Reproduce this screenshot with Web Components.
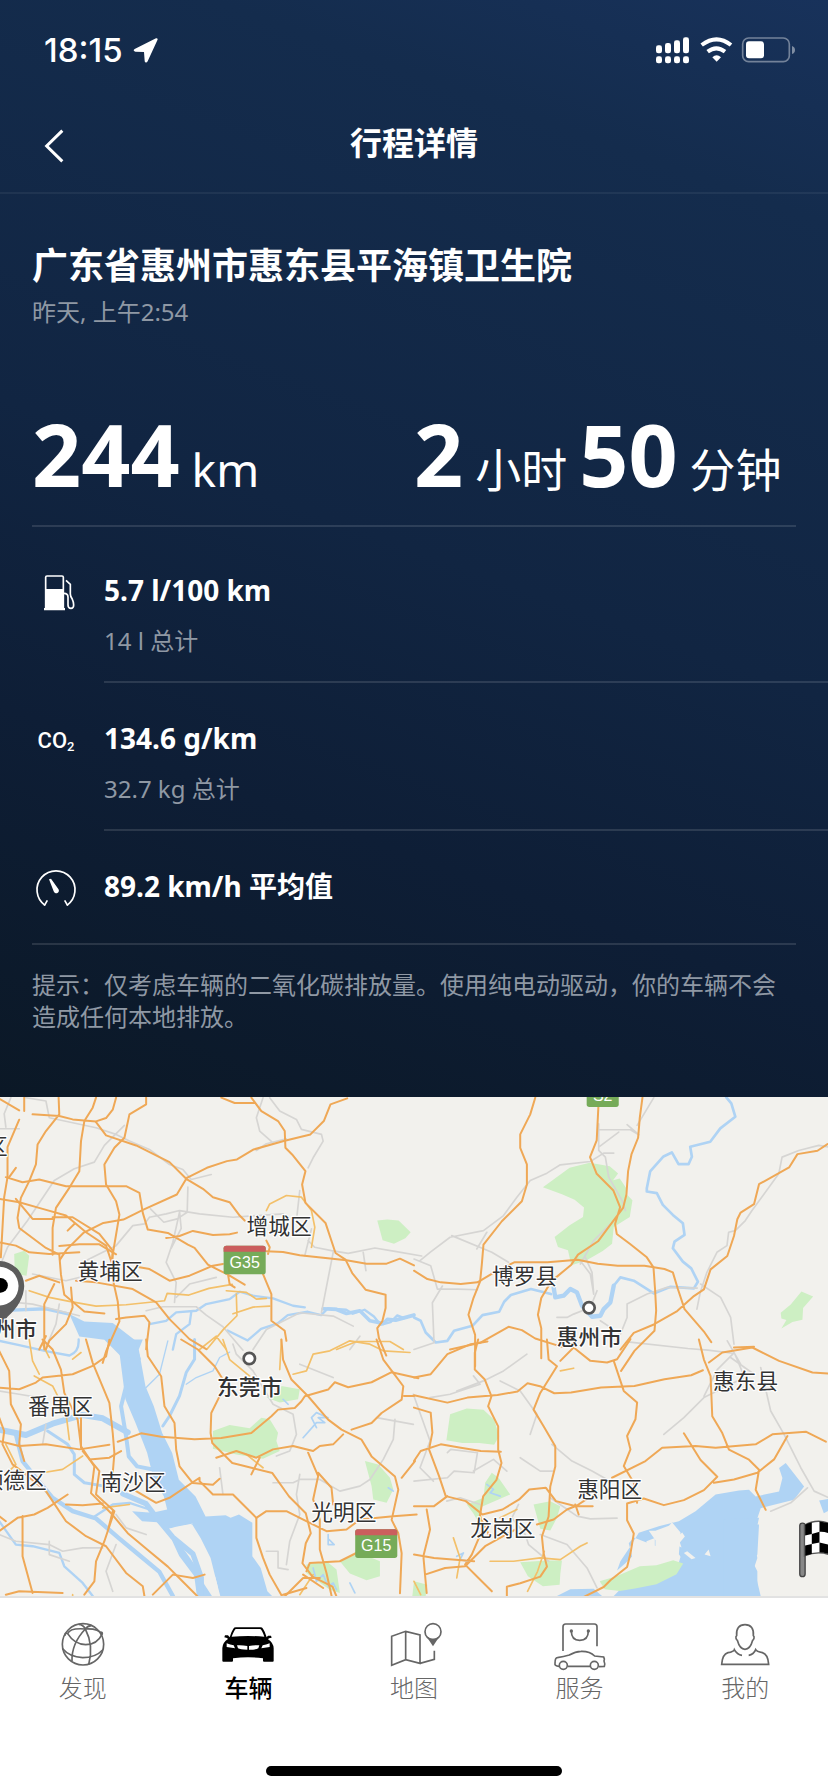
<!DOCTYPE html>
<html lang="zh-CN">

<head>
  <meta charset="UTF-8">
  <meta name="viewport" content="width=device-width, initial-scale=1.0">
  <title>行程详情</title>
  <style>
    body {
      margin: 0;
      font-family: "Noto Sans", "Noto Sans CJK SC", sans-serif;
      background: #fff;
    }
  </style>
</head>

<body>
  <trip-page>
    <status-bar slot="top">18:15</status-bar>
    <nav-bar slot="top">行程详情</nav-bar>
    <trip-summary slot="top">
      <span slot="place">广东省惠州市惠东县平海镇卫生院</span>
      <span slot="time">昨天, 上午2:54</span>
      <trip-figure slot="figures"><b>244</b><span>km</span></trip-figure>
      <trip-figure slot="figures"><b>2</b><span>小时</span><b>50</b><span>分钟</span></trip-figure>
    </trip-summary>
    <trip-stats slot="top">
      <trip-stat icon="fuel">5.7 l/100 km<span slot="total">14 l 总计</span></trip-stat>
      <trip-stat icon="co2">134.6 g/km<span slot="total">32.7 kg 总计</span></trip-stat>
      <trip-stat icon="gauge">89.2 km/h 平均值</trip-stat>
      <span slot="note">提示：仅考虑车辆的二氧化碳排放量。使用纯电动驱动，你的车辆不会造成任何本地排放。</span>
    </trip-stats>
    <route-map></route-map>
    <tab-bar slot="bottom">
      <tab-item icon="globe">发现</tab-item>
      <tab-item icon="car" active>车辆</tab-item>
      <tab-item icon="map">地图</tab-item>
      <tab-item icon="service">服务</tab-item>
      <tab-item icon="person">我的</tab-item>
    </tab-bar>
  </trip-page>

  <script>
    const ICONS = {
      fuel: `<svg viewBox="6 27 144 144" fill="none" stroke="#fff" stroke-width="5">
        <path d="M47 146V52q0-4 4-4h45q4 0 4 4v94"/>
        <path d="M45 87h57v57h3v7H42v-7h3z" fill="#fff" stroke="none"/>
        <path d="M108 61l13 12v29q0 7 6 16 4 8 4 17 0 10-8 10-9 0-9-10v-24q0-11-12-11" stroke-width="5"/>
      </svg>`,
      co2: '<span class="co2">CO<sub>2</sub></span>',
      gauge: `<svg viewBox="96 559 144 144" fill="none" stroke="#fff" stroke-width="5">
        <path d="M135 680a57 57 0 1 1 66 0"/>
        <path d="M142 665l-9 16M194 665l9 16" />
        <path d="M147 602l6-2 22 31a8 8 0 1 1-14 7z" fill="#fff" stroke="none"/>
      </svg>`,
      globe: `<svg viewBox="164 90 168 156" fill="none" stroke="#666" stroke-width="5">
        <circle cx="248" cy="163" r="62"/>
        <path d="M255 117q-46-4-53 14 20 32 54 33 34 0 49-31-10-18-50-16z"/>
        <path d="M255 117q-6-13-20-14M255 117q6-9 18-10M255 117q-42 44-40 97M255 117q26 50 10 107"/>
        <path d="M202 131q-8-4-8 6M305 133q3-5-3-7M187 176q20 24 60 27 38 0 60-23"/>
      </svg>`,
      car: `<svg viewBox="661 90 168 156">
        <path d="M690 142q5-18 11-26 2-4 8-4h73q6 0 8 4 6 8 11 26l4-5h9l2 6-8 2-3 3q16 10 17 27v38q0 2-3 2h-26q-3 0-3-3v-7q-45-6-90 0v7q0 3-3 3h-26q-3 0-3-3v-38q1-17 17-27l-3-3-8-2 2-6h9z"/>
        <path d="M696 140q7-18 12-23h74q6 5 12 23-49-4-98 0zM681 160q11 5 21 6l4 9-25-4zM810 160q-11 5-21 6l-4 9 25-4zM712 166q16-1 31 2v11q-22 0-28-4zM779 166q-16-1-31 2v11q22 0 28-4z" fill="#fff"/>
      </svg>`,
      map: `<svg viewBox="1158 90 168 156" fill="none" stroke="#666" stroke-width="5">
        <path d="M1175 226v-87l42-15 43 11v85l-43-11zM1217 124v85M1260 220l43-12v-26"/>
        <circle cx="1299" cy="125" r="24"/>
        <path d="M1287 146l12 18 12-18q-12 6-24 0z" fill="#666"/>
      </svg>`,
      service: `<svg viewBox="413 90 168 156" fill="none" stroke="#666" stroke-width="5">
        <path d="M446 183v-73q0-8 8-8h86q8 0 8 8v59M471 123q0 28 25 28 26 0 26-28"/>
        <path d="M434 229q-14-1-12-9 0-17 7-17 19-3 36-8 18-11 35-11 26-1 41 14l27 3q4 7 1 12 4 9 1 16l-17 1M460 229h67"/>
        <circle cx="447" cy="226" r="12"/><circle cx="540" cy="226" r="12"/>
        <g fill="#666" stroke="none"><circle cx="471" cy="123" r="5"/><circle cx="522" cy="123" r="5"/></g>
      </svg>`,
      person: `<svg viewBox="910 90 168 156" fill="none" stroke="#666" stroke-width="5">
        <path d="M994 104c-18 0-27 12-25 33-5 4-1 12 2 14 4 15 13 27 23 27s19-12 23-27c3-2 7-10 2-14 2-21-7-33-25-33z"/>
        <path d="M985 196q-15-2-23-17-2 6-19 9-17 5-19 35h141q-2-30-19-35-17-3-20-9-6 15-21 17"/>
      </svg>`
    };

    class BaseElement extends HTMLElement {
      constructor() {
        super();
        this.attachShadow({ mode: 'open' });
      }
      connectedCallback() {
        this.shadowRoot.innerHTML = this.render();
      }
    }

    class TripPage extends BaseElement {
      render() {
        return `
<style>
  :host { display: flex; flex-direction: column; min-height: 100vh; }
  header { color: #fff; background: linear-gradient(200deg, #18325b 0%, #142c4d 16%, #112542 50%, #0e1e36 72%, #0b1826 100%); }
  main { flex: 1; display: flex; min-height: 300px; }
</style>
<header><slot name="top"></slot></header>
<main><slot></slot></main>
<slot name="bottom"></slot>`;
      }
    }

    class StatusBar extends BaseElement {
      render() {
        return `
<style>
  :host {
    display: flex; justify-content: space-between; align-items: center;
    height: 100px; padding: 0 32px 0 44px; box-sizing: border-box;
    font: 500 33px/40px Inter, sans-serif;
  }
  div { display: flex; align-items: center; gap: 10px; }
  svg { display: block; }
</style>
<div>
  <slot></slot>
  <svg width="25" height="25" viewBox="311 53 75 75" fill="#fff"><path d="M380 54q7-1 4 6l-29 63q-3 5-7 3-2-1-2-5l-2-26-26-1q-9-3-2-8z"/></svg>
</div>
<svg width="141" height="28" viewBox="42 47 423 84" fill="#fff">
  <rect x="45" y="75" width="18" height="24" rx="7"/><rect x="72" y="68" width="18" height="31" rx="7"/>
  <rect x="99" y="60" width="18" height="39" rx="7"/><rect x="126" y="51" width="18" height="48" rx="7"/>
  <rect x="45" y="108" width="18" height="21" rx="7"/><rect x="72" y="108" width="18" height="21" rx="7"/>
  <rect x="99" y="108" width="18" height="21" rx="7"/><rect x="126" y="108" width="18" height="21" rx="7"/>
  <path d="M182 74q45-34 88 0M200 94q26-20 52 0" fill="none" stroke="#fff" stroke-width="12"/>
  <path d="M227 124l-13-13q13-13 26 0z"/>
  <rect x="305" y="53" width="140" height="71" rx="18" fill="none" stroke="#fff" stroke-opacity=".4" stroke-width="5"/>
  <rect x="315" y="63" width="54" height="51" rx="9"/>
  <path d="M453 77q9 3 9 12t-9 12z" opacity=".45"/>
</svg>`;
      }
    }

    class NavBar extends BaseElement {
      render() {
        return `
<style>
  :host {
    display: grid; grid-template-columns: 48px 1fr 48px; align-items: center;
    height: 94px; padding: 0 32px; box-sizing: border-box;
    border-bottom: 2px solid rgba(255, 255, 255, .06);
  }
  h1 { margin: 0; padding-bottom: 6px; font-size: 32px; line-height: 40px; font-weight: 600; text-align: center; }
  button { display: flex; padding: 0; width: 48px; height: 48px; align-items: center; justify-content: center; border: 0; background: none; }
  svg { margin-right: 4px; }
</style>
<button aria-label="返回"><svg width="20" height="34" viewBox="42 327 60 102" fill="none" stroke="#fff" stroke-width="9"><path d="M97 332L50 378l47 46"/></svg></button>
<h1><slot></slot></h1>`;
      }
    }

    class TripSummary extends BaseElement {
      render() {
        return `
<style>
  :host { display: block; margin: 0 32px; padding: 48px 0 18px; border-bottom: 2px solid rgba(255, 255, 255, .12); }
  h2 { margin: 0; font-size: 36px; line-height: 48px; font-weight: 600; }
  p { margin: 6px 0 88px; font-size: 24px; line-height: 32px; color: #8f98a4; }
  div { display: grid; grid-template-columns: 1fr 1fr; }
</style>
<h2><slot name="place"></slot></h2>
<p><slot name="time"></slot></p>
<div><slot name="figures"></slot></div>`;
      }
    }

    class TripFigure extends BaseElement {
      render() {
        return `
<style>
  :host { display: flex; align-items: baseline; gap: 12px; line-height: 76px; font-size: 46px; white-space: nowrap; }
  ::slotted(b) { font-size: 86px; font-weight: 700; }
</style>
<slot></slot>`;
      }
    }

    class TripStats extends BaseElement {
      render() {
        return `
<style>
  :host { display: block; padding: 8px 0 64px; }
  p { margin: 0 32px; padding-top: 24px; font-size: 24px; line-height: 32px; color: #8f98a4; border-top: 2px solid rgba(255, 255, 255, .12); }
</style>
<slot></slot>
<p><slot name="note"></slot></p>`;
      }
    }

    class TripStat extends BaseElement {
      render() {
        return `
<style>
  :host { display: flex; gap: 24px; padding-left: 32px; }
  .icon { width: 48px; height: 48px; margin-top: 34px; display: flex; align-items: center; justify-content: center; }
  svg { width: 48px; height: 48px; }
  .co2 { font: 500 22px/24px Roboto, sans-serif; }
  sub { font-size: 13px; line-height: 12px; vertical-align: -3px; }
  .text { flex: 1; padding: 36px 0 24px; border-bottom: 2px solid rgba(255, 255, 255, .12); }
  :host(:last-of-type) .text { border: 0; padding-bottom: 38px; }
  h3 { margin: 0; font-size: 28px; line-height: 38px; font-weight: 700; }
  p { margin: 16px 0 0; font-size: 24px; line-height: 32px; color: #8f98a4; }
</style>
<div class="icon">${ICONS[this.getAttribute('icon')]}</div>
<div class="text">
  <h3><slot></slot></h3>
  ${this.querySelector('[slot=total]') ? '<p><slot name="total"></slot></p>' : ''}
</div>`;
      }
    }

    class RouteMap extends BaseElement {
      render() {
        return `
<style>
  :host { display: flex; flex: 1; background: #f2f1ed; overflow: hidden; }
  svg { display: block; width: 100%; height: 100%; }
  .park { fill: #cdefc3; }
  .sea { fill: #afd3f4; }
  .river, .road, .lane, .rail { fill: none; stroke-linejoin: round; stroke-linecap: round; }
  .river { stroke: #afd3f4; stroke-width: 7; }
  .road { stroke: #efa856; stroke-width: 6; }
  .lane { stroke: #f3c06a; stroke-width: 5; }
  .rail { stroke: #d6d5d3; stroke-width: 5; }
  .place { font-size: 65px; fill: #333; stroke: #fff; stroke-width: 7; stroke-linejoin: round; paint-order: stroke; text-anchor: middle; }
  .city { font-weight: 500; }
  .shield { font: 48px "Liberation Sans", sans-serif; fill: #fff; text-anchor: middle; }
</style>
<svg viewBox="0 0 2484 1494" preserveAspectRatio="xMidYMid slice" role="img" aria-label="行程地图">
  <!-- parks -->
  <g class="park">
    <path d="M1132 370l30-3 34 3 36 35-16 18-34 16-34-10z"/>
    <path d="M45 470l30-10 15 15-8 60-35-5z"/>
    <path d="M1628 270l80-58 60-15 60 10 25 22-15 20 20-5 20 30-2 15 20 20-8 50-48 30-5 50-28 22-52 30-42 13-10-45-30-10-10-30 45-35 40-25 3-28-28-23-38-17z"/>
    <path d="M2340 646l30-25 32-39 35 15-30 35-2 35-30 7-33 19 15-25-15-5z"/>
    <path d="M640 1000l50-18 60 10 35-32 25 5 25 40-5 25 10 30-50 23-80-13-70-17z"/>
    <path d="M845 865l55 10-5 30-55 10-40-15 40-12z"/>
    <path d="M1095 1090l40 10 35 40 10 35-20 40-40-10-5-40z"/>
    <path d="M920 1400l60-10 30 25 10 70-30-10-70-50zM1020 1390l60-25 60 25 0 45-40 12-50-20z"/>
    <path d="M1350 950l50-17 50 3 32 30 15 50-15 25-45-5-50 0-48-8z"/>
    <path d="M1400 1220l50-20 5-45 20-30 20 15 35 50-35 15-50 22-5 55-20-35z"/>
    <path d="M1600 1220l50-10 30 15-10 35-20 38-30-5z"/>
    <path d="M1560 1393l80-5 45 0-5 40-2 32-50 5-45-30z"/>
    <path d="M1242 1450l40 10-5 34h-40z"/>
  </g>

  <!-- sea and wide channels -->
  <g class="sea">
    <path d="M355 726h75l-12 30 20 110 25 60 25 80 30 60 20 80 50 50 30 60 60-4 15 8 25-10 40 25v100l25 35 20 70 40 40h-180l-10-60-20-80-30-60-25-40-70 5-10-10-70-5-30-30 60 5 45-10-10-40-30-50-20-80-35-90-30-70z"/>
    <path d="M500 1290l-30-40 60 0 40 30-70 15 50 55 35 50 30 60 22 34h-45l-8-60-45-60z"/>
    <path d="M210 650l45 22 85 5 65 50 20 60-60-10-50-50-75-10z"/>
    <path d="M2110 1494l10-90-30-15-30 15-25-35 5-65-25-30-10 10-40 15-20 0 20 28 0 17-65-25-15 17 10 40-20 20-25 22 10-28 30-45 25-40 60-20 60-15 50-30 60-50 70-12 30-2 20 20 70-15 10-40-10-30 20-15 55 70-30 40-100 25-30 90-2 180z"/>
    <path d="M1960 1428l70-18 15-50 80-80 150 0-5 90-15 20 15 30 0 74h-430l20-20z"/>
    <path d="M1670 1494l40-20 70-2 25 22zM2455 1208l29-5v35l-15 8z"/>
    <path d="M2275 1260l-15 70 10 50-10 30 20 84h-110v-230z"/>
  </g>
  <path class="park" d="M1798 1450l50-15 70-30 50-3 50-15 30 10-20 32-60 30-60 12-50 8-45-5z"/>
  <path d="M2000 1300l35 12 10-8 8 12-15 18 5 15-40-20-20-15zM1938 1330l25-10 0 40-25 12zM2050 1365l10-5 25 20-12 4zM2112 1370l12-15 6 20z" fill="#f2f1ed"/>
  <path d="M500 1295l30-8 50-10-30 20zM575 1279l22 58 50 100 15 57h-20l-30-105-75-70z" fill="#f2f1ed"/>

  <!-- rivers -->
  <g class="river">
    <path d="M40 638l100-4 70 16" stroke-width="10"/>
    <path d="M0 730l60 13 80 18 70 13q30-10 28-48"/>
    <path d="M450 680l50-10 30-25 60-5 30-20 70-15 30-22 40 12 60 8 60 22 35 5" stroke-width="7"/>
    <path d="M575 645l-5 35-40 30-10 46M1242 652l-30 10-20-8-20 20-30 8-20-25-28-20-35 12-20-12-55-4-20 20-40-10-60 10-30 25-50 16-40 35-60-30"/>
    <path d="M970 634l40 2 30 12 40-8 30 30 40 8 12-12 25 2 55-15" stroke-width="11"/>
    <path d="M1242 660l20 10 15 35 30 30 35-5 20-30 55-15 30-32 50-10 15-30 20-20 60-18 60 15M1660 570l5 30 25-5 20-20 20 10 15 40 30 33 25-3 10-20 20-20 10-50 20-25 40 10 60 38 50-20 70 5 12-20-20-40-25-20-30-40 5-20 30-20-5-35-30-25-30-30-18-35-30-5 0-10 10-50 40-45 25-12 20 35 30 0 10-22-5-30 60-15 30-40 45-35-12-40-15-18" stroke-width="8"/>
    <path d="M1660 570l5 30 25-5 20-20 20 10 15 40 30 33 25-3 10-20 20-20 10-50" stroke-width="13"/>
    <path d="M0 996l80 16 80-34 90-26 60 10 75 42" stroke-width="18"/>
    <path d="M380 866l-15 60 15 90 8 60 25 30 70 14" stroke-width="12"/>
    <path d="M50 1010l20 80 40 50 50 60 60 40 70 22 70 60 60 50 60 50 40 72" stroke-width="13"/>
    <path d="M145 1000l60 40 20 30 0 60 30 25 60 10" stroke-width="9"/>
    <path d="M370 1188l70 30 30 40 50 60 60 50 25 70 0 55" stroke-width="16"/>
    <path d="M0 1270l50 70 50 5 80 20 15 40 55 50 30 39M280 1260l60-40 50-5 60 20"/>
    <path d="M490 985l20-30 30-60 20-70 25-40 0-59" stroke-width="9"/>
    <path d="M560 860l30-20 50-20 20-40 30-16M440 870l40-40 25-100" stroke-width="4"/>
    <path d="M910 1020l40-45 25 0-20-15 30 0-35-15-15 15 15 30M985 1310l0 30 18 0-15-15M940 1410l10 40 20-20 15 35 15-10 10 20M1050 1455l15 30M850 905l15 15" stroke-width="5"/>
    <path d="M1460 1160l20 15-10 10 30 10M1370 1375l20-10-10 20 25 5M1165 1170l15 10" stroke-width="5"/>
  </g>

  <!-- minor roads and railways -->
  <g class="rail">
    <path d="M80 2l60 10 10 50 140 30 60 20 40 20 60 25 60 45 40 15 25 30 60-15M20 90l-5-40 20-48M0 95h60"/>
    <path d="M5 500l20-50 60-80 40-60 40-60 60-35 60-20 30-50 60-60"/>
    <path d="M565 270l-2 75-30 20-40 10-40-40M450 360l50-10 40-10 60 10 100 10 150-10M540 345l-20 90-20 60 30 60-5 60M540 343l5 50-30 60M450 360l-15 20-35 5-50 60-40 20-60 30"/>
    <path d="M790 2l-20 60 10 40 40 35M810 2l30 40 50 25 15 30 60 15 5 20-30 50-15 30M770 160l30-20 60-15M900 280l-10 90M1000 465l-35 180M925 430l20 20 50 10 50 8 80-16 60 10 80 14M915 475l20-80M1090 465l8 55"/>
    <path d="M0 610l100 10 80 20 60 15M440 640l50-12 100 0 30 25 50 35 60 70M80 580l0 60M530 600l40-40 80-20M760 756l40-60 100-50 100 10 60 30M180 620l-10 60-30 70M1050 756l30-40M100 530l100 20 80-20"/>
    <path d="M1242 485l50 20 20 70 60 0 60 2M1260 490l30-25 60-45 100-20 60-45 40-55 40-50 50-22 40-25 90-10 40-25 30 0M1430 455l30-50M1355 415l120 50 50 30M1795 80v80l20 20 10 60 40 70 10 30M1795 98h95l25 15-35-30M1795 150l60-45M1910 85l50-83M1740 490l30 40 10 60M1755 480l20 45 5 65M1830 380l-50 50-40 70"/>
    <path d="M2484 150l-30-5-60 15-50 20-10 50-80 110-20 30-30 30-20 5-5 40-30 20-30 60-20 60-10 50M2100 560l60 40 30 60 10 80M1242 756l60-20-5-120 30-50M1880 620l60-30 60-20 90 2M1880 620l0 40-20 50-60-40M1670 660l30 0 20-10 50-20 20-50"/>
    <path d="M1882 733l180 20 60 5 80 10 25 60M2180 730l40 70M1990 1010l60-50 60-60 80-40 60-30M2200 766l-50 50-40 80M2280 810l30 130 40 70 50 100 40 70 44 20M2190 780l70 50"/>
    <path d="M1370 880l80-30 60-30 70-50M1290 900l60-10 90-30-20-25M1500 850l60 30 50 70-20 60M1655 1040l60 50 60 30 45 25M1650 1200l80 55 40 8 80-2M1242 1150l100-10 20-20 60 5 10-60-80-10-10 10M1300 1150l-40-40 30-80-50-140M1555 1220l-20 40 40 50 10 30 60 50M1620 1310l80 30 60 70 30 60M1560 1080l60 40h40M1420 1120l60-35 40 35M1340 1210l40-10 60 20M2310 1240l60-25 50-45"/>
    <path d="M700 740l10 30 50 50 60 100 60 30 10 60-20 50-40 15M820 1155l60 0 20-10 60 0 60 35 60-15 30-20 40-60 30-60 5-60M900 1130l-10 60 10 60-30 80-10 70M800 1360l35 0 0 50 30 5M660 1110l10 80M0 880l60 10 60 10M140 980l-10 60M0 1310l50 20 100 10 40 20 60-10 60 0M150 1330v40l60 20M350 1250l30 40 60 20M340 1480l-20-60 30-80M1130 960l110 20M1000 840l-100-40"/>
  </g>

  <!-- secondary roads -->
  <g class="lane">
    <path d="M90 580l60 20 60 12 80 14 90-4 115-12 8-22 65 5 60-20 70-12M680 580l60 5 30 20 30-2M710 590l2 65-40 40-50 60M810 626l-50 3-60 20M800 340l10-20 50-25 45 5 30 40 10 50-10 60M600 756l50-40 30 40M1010 756l60-24h100l40 24"/>
    <path d="M880 830l40-10 20-50 50-10 60-30 60 10 40 20 80 5M670 726l20 60 60 50M845 726l-5 90M200 946l10 80M205 940l0-30M105 835l55 30 30 60M310 1230l80-10M20 1040l30 60-30 30M130 1125l60-10 60-40M120 830l-20-40-10-64"/>
    <path d="M1470 1390l70 0 80-10 60 5 60-40 20-10M1632 1360l-20 60-30 60M1500 1260l50-25M1360 1320l20 60-10 60M740 1070l50 40M1242 1450l20 40M900 1490l40-60M1680 820l40-8M130 740l20 40M220 1490l0 4M220 785l25-20"/>
  </g>

  <!-- motorways, north-west -->
  <g class="road">
    <path d="M0 5l60 35M75 2v40M60 68L25 150v90L15 300 5 480M100 52l80 5 40 10 70 6 30-10 20-25 10-36M178 2l2 50-40 50-25 40-5 60-20 50-25 50-10 60 5 30 80 60 40 20 5 60 10 60 60 50 60 6M290 2l-10 30-25 40-10 60-5 90-30 50-40 60-10 60 0 80M440 2v20l-50 30-15 70-30 30-30 50 5 60 30 50 10 40-20 120-5 50 20 90 5 60-40 90-10 34"/>
    <path d="M290 75l30 40 90 30 100 50 50 50 50 30 30 25 50 15 30 40 15 15M562 242l60-30 60-20 30-5 50-30 90-25 80-20 40-40 20-50 50-18M562 242l-30 50-100 45-60 30-60 10-60 30-50 50-20 30M665 2l40 16h60M755 2l30 40 50 30 20 30 2 50 20 20 40 50-10 40 10 55 60 60 30 90 30 20 20 40 40 50 60 15 0 40-10 40-15 20 5 30 22 52"/>
    <path d="M0 305l60 10 70 20 70 20 60 50 60 40 20 60M20 240l50 15 50-8 80 20 80 0 100 0 40 20 10 60 15 50 60 10 60 35 20 10 40 50 60 30 50 30M50 212l-20 28M500 422l40-6 40-15 60 12 50-2 22-5M800 462l50 2 50 10 140 15 60 10 60 0 40-15 42 20M800 430l10 20-5 20M0 435l50 10 40 20 60 5 90-5M420 510l30 5 60 35 60-15 70-30 30-5M80 550l40-15 60 20M230 550l60 5 110 20 70 40 40 50 60 60 50 30M350 665l30-5 55-5 15 20-10 80M790 530l25 60v80l40 30 5 30M685 530l5 30 15 10M205 400l20-20M160 360l60 0 80 50 40 50-5 80"/>
    <path d="M135 756V620l30-60M215 570l5 60-20 50-50 50-10 26M120 756l20-40M180 446l60-5 60 0 50 30M50 305l50 60 60 0"/>
  </g>

  <!-- motorways, north-east -->
  <g class="road">
    <path d="M1605 2l-15 50-30 60 0 40 20 50 0 60-15 50-60 60-55 70-5 60-5 50-20 50-15 50 20 60 0 94M1794 30l-5 100-20 50 20 50 50 50 20 50-15 50 5 30 40 30 50 40 20 30 5 70 3 60-5 60-60 60-40 60M1926 2l-8 60-5 60-20 50-10 50-5 70-10 40-45 60-30 40-60 40-20 30-60 50-30 50-10 50 10 40 0 90"/>
    <path d="M1242 520l40 25 40 10 60 5 50-5 50-30 60-30 100 0 90-8 60 12 60 6 80 0 60 10 25 10 15 50 20 60 60 70 20 29M1350 756l90-20 85-48 40 10 40 25 80 25M1860 756l40-50 60-25 70-40 50-45 30-20 20-60 50-40 20-60 10-50 10-20 40-25 15-60 90-50 25-40 60-10 30-20M2200 750l60-2"/>
  </g>

  <!-- motorways, south-west -->
  <g class="road">
    <path d="M0 870l60 5 50-20 20-15 90-10 60-25 40-28 10-50M0 960l15 40-5 40 30 60 40 30 60 50 60 90 60 45 60 30 60 80 50 40 10 60M0 760l30 60 5 100 30 60-5 60 15 50M130 726l30 30 25 60 10 70 40 80 10 80 40 60-10 80 60 60 50 60 60 50 60 50 40 40 50 50"/>
    <path d="M260 726l20 70 25 60 25 60 10 90 5 60-5 60M440 726l5 50 40 60 10 90 30 50 5 80 10 50 40 50 60 5 20-18M545 726l50 30 50 50 25 40-5 40-30 60-2 60 5 30 60 60 60 15 60 15 50 70 50 50 15 60-15 30-10 60 30 40 60 30 20 49M0 1030l60 15 80-5 100 15 90-14M355 1032l70-25 60 10 100 8 80-4 90-15 60-50 20-20 50-5 20-20 10-15 70-20 20-22 40 15 70-15 60-30 80 18"/>
    <path d="M250 1060l50 60-10 70 55 50-30 90-25 60-5 60-30 40M245 960v90M270 1085l60-5 35-20M410 1180l60 35 40-15 90-60 0 10 40 40 60 0 30 30 40 40v60l20 60 20 50 40 70 60-60 50 0M340 1240l-15 60M205 1190l-60 40-40 20-50 10-55 40M70 1255l0 120 30 110M200 1220l50 2 60-5M20 1490l40-10 130 5M460 1490l60-60 60 10 35-10"/>
    <path d="M845 726l5 60 25 60 50 50 60 70 40 30 60 30 30 50 70 60 10 40-20 90 20 40 10 60-5 120M1130 726l20 60 30 40 30 40-5 40-60 40-30 30-60 20M1030 1010l-30 30-40 5-20 15-60-15-60 10-50 25-60-20-60 20M780 1080l-25 50M925 1065l30 70-15 70 20 60 0 90 20 70 20 90M955 1125l40 45 5 50M770 1260l30-20 60 0 40 20 80 40 60-5 40-30 100-10 70-5M920 1420l10-25 90-5 60-30M910 1430l60 40M1205 1140l40-50M1212 895h30M0 1255l20 15M850 1490l70-20"/>
  </g>

  <!-- motorways, south-east -->
  <g class="road">
    <path d="M1242 840l50-10 50-60 70-30 50-8M1434 726l-10 40 0 50 30 30 20 50-10 30 30 60 0 70 10 40-15 50-40 50-10 60 30 60M1242 893l100 22 60-15 90-8 60-10 30-25 40 10 40 20 50-2 90-15 100-5 90-20 80-12 35-15M1640 726l5 60 25 20-50 80-20 50 30 50 35 60 0 60-15 60-5 90-20 60 5 50 10 40-20 30-60 20-40 10 0 50-40 30-20 50M1680 790l40-40 50 40 50 5 30-10 40-60M1840 790l30 90 40 35-5 50-25 50 10 40-20 50 30 50 10 60"/>
    <path d="M1242 930l50 15 5 60-10 50 30 80 20 60 60 15 50 40 60-15 50-30 30-30 50-5 30 40 60 15 50 0M1242 1090l20-30 60-20 60 10 60 10 60 2M1242 1225l60 0 40-30M1280 1235l10 60-20 80 10 110M1242 1370l60 10 120 10M1440 1250l5 50-30 70-20 30 40 40 40 40M1275 1430l60-20 60-5 60-60 90-50M1725 1220l10 30M1610 1280l50-15 40-30 30-12 30-20M1835 1140l100-50 50-40 100-5 60 5 120-10 50-30 100-8 60 30M2095 726l15 60 20 50 5 120 30 50 20 50 60 30 30 30-10 60 30 60M2125 795l40-30 90-15 80 40 100 35 49 3M2050 1007l50 80 50 50-40 40-60 30-60 15-60-20-50 15 0 50 20 40-10 60-10 40-50 40-20 20-100 50-70 5-100 20M2360 1015l-40 70-50 40-70 20-60 10"/>
  </g>

  <circle cx="749" cy="783" r="17" fill="#fff" stroke="#555" stroke-width="8"/>
  <circle cx="1766" cy="631" r="17" fill="#fff" stroke="#555" stroke-width="8"/>

  <!-- start and finish -->
  <path d="M-75 566a75 75 0 1 1 150 0q-2 50-50 92-12 14-18 32-4 8-14 0-10-24-25-38-41-40-43-86z" fill="#5c5c5c"/>
  <circle cx="0" cy="566" r="58" fill="#fff"/>
  <circle cx="4" cy="564" r="22"/>
  <g>
    <rect x="2397" y="1276" width="16" height="160" rx="8" fill="#888" stroke="#444" stroke-width="4"/>
    <path d="M2411 1282q35-20 73-6v94q-35-12-73 4z" fill="#fff" stroke="#555" stroke-width="4"/>
    <path d="M2413 1281q10-6 20-7v34l-20 5zM2456 1271l28 5v30q-14-5-28-4zM2433 1308l23-6v32l-23 4zM2413 1343l20-5v30l-20 5zM2456 1334l28 6v28q-14-4-28-4z"/>
  </g>

  <!-- road shields -->
  <g>
    <rect x="672" y="445" width="126" height="86" rx="8" fill="#76ab59"/>
    <path d="M672 463v-10q0-8 8-8h110q8 0 8 8v10z" fill="#cb5e5e"/>
    <text class="shield" x="735" y="512">G35</text>
    <rect x="1066" y="1294" width="126" height="86" rx="8" fill="#76ab59"/>
    <path d="M1066 1312v-10q0-8 8-8h110q8 0 8 8v10z" fill="#cb5e5e"/>
    <text class="shield" x="1129" y="1360">G15</text>
    <rect x="1759" y="-56" width="96" height="86" rx="8" fill="#76ab59"/>
    <text class="shield" x="1807" y="11">S2</text>
  </g>

  <g class="place">
    <text x="-7" y="170">区</text>
    <text x="838" y="410">增城区</text>
    <text x="332" y="545">黄埔区</text>
    <text x="1573" y="559">博罗县</text>
    <text class="city" x="16" y="720">广州市</text>
    <text class="city" x="1767" y="742">惠州市</text>
    <text class="city" x="750" y="893">东莞市</text>
    <text x="2235" y="873">惠东县</text>
    <text x="184" y="950">番禺区</text>
    <text x="45" y="1171">顺德区</text>
    <text x="401" y="1178">南沙区</text>
    <text x="1828" y="1199">惠阳区</text>
    <text x="1032" y="1266">光明区</text>
    <text x="1508" y="1313">龙岗区</text>
  </g>
</svg>`;
      }
    }

    class TabBar extends BaseElement {
      render() {
        return `
<style>
  :host { display: block; padding: 22px 0 16px; background: #fff; border-top: 2px solid #e2e2e2; }
  nav { display: grid; grid-template-columns: repeat(5, 1fr); }
  i { display: block; width: 296px; height: 10px; margin: 62px auto 0; border-radius: 5px; background: #000; }
</style>
<nav><slot></slot></nav>
<i></i>`;
      }
    }

    class TabItem extends BaseElement {
      render() {
        return `
<style>
  :host { display: block; color: #666; font-weight: 300; }
  :host([active]) { color: #000; font-weight: 500; }
  a { display: flex; flex-direction: column; align-items: center; color: inherit; text-decoration: none; font-size: 24px; line-height: 32px; }
  svg { display: block; width: 56px; height: 52px; }
</style>
<a href="#">${ICONS[this.getAttribute('icon')]}<span><slot></slot></span></a>`;
      }
    }

    customElements.define('trip-page', TripPage);
    customElements.define('status-bar', StatusBar);
    customElements.define('nav-bar', NavBar);
    customElements.define('trip-summary', TripSummary);
    customElements.define('trip-figure', TripFigure);
    customElements.define('trip-stats', TripStats);
    customElements.define('trip-stat', TripStat);
    customElements.define('route-map', RouteMap);
    customElements.define('tab-bar', TabBar);
    customElements.define('tab-item', TabItem);
  </script>
</body>

</html>
